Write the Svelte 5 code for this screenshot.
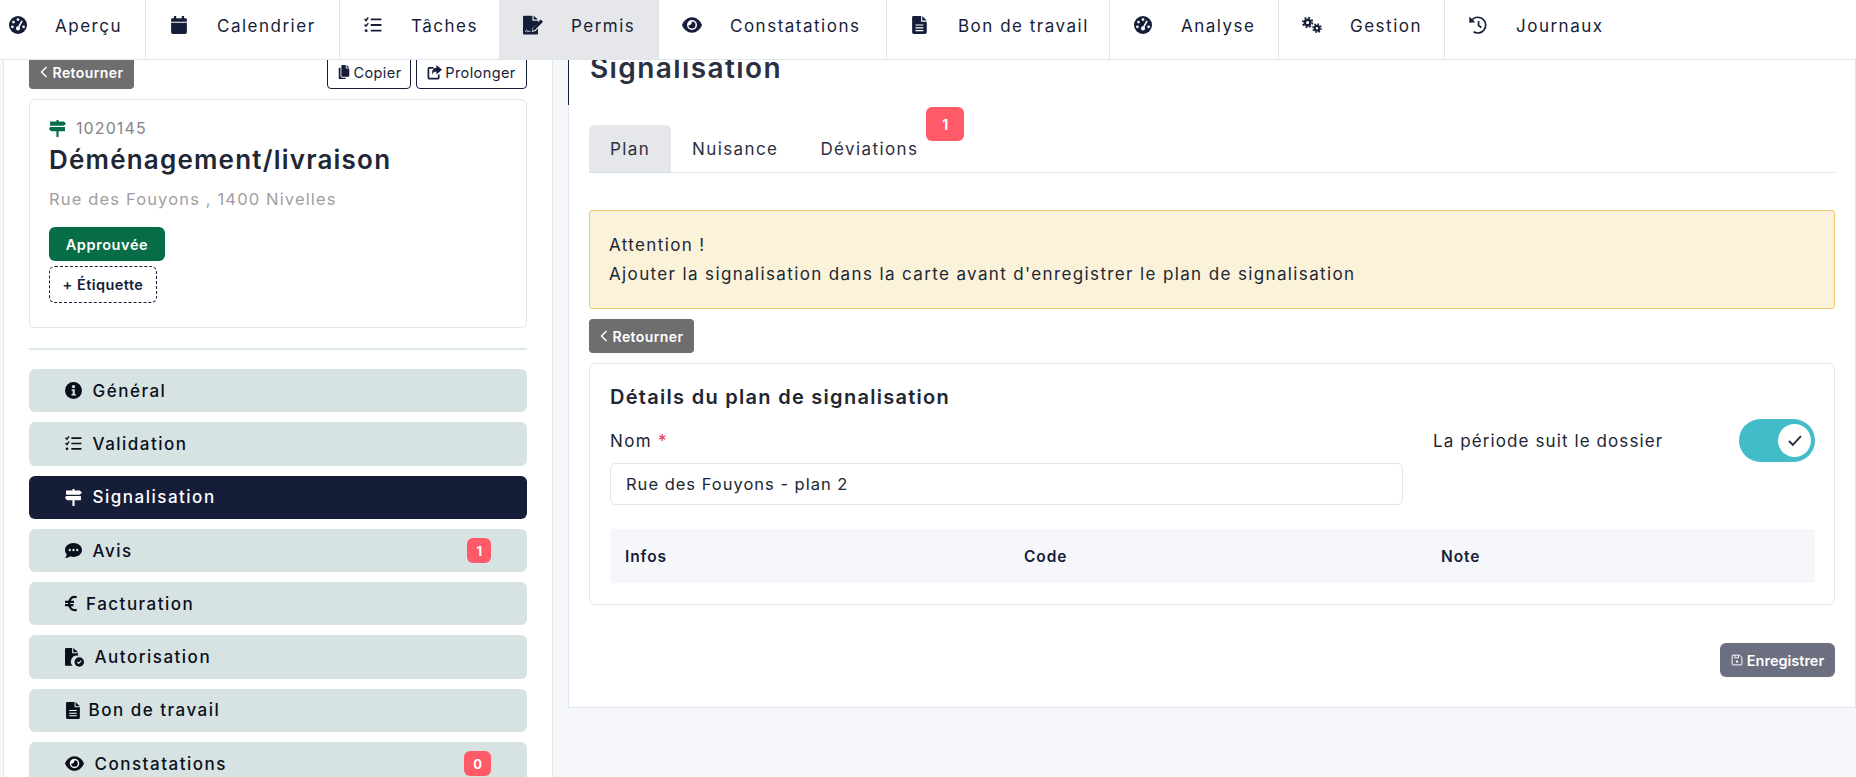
<script>
	const navItems = [
		{ icon: 'gauge', label: 'Aperçu', size: 18 },
		{ icon: 'calendar', label: 'Calendrier', size: 18 },
		{ icon: 'tasks', label: 'Tâches', size: 18 },
		{ icon: 'sign', label: 'Permis', size: 20 },
		{ icon: 'eye', label: 'Constatations', size: 20 },
		{ icon: 'doc', label: 'Bon de travail', size: 18 },
		{ icon: 'gauge', label: 'Analyse', size: 18 },
		{ icon: 'cogs', label: 'Gestion', size: 20 },
		{ icon: 'history', label: 'Journaux', size: 18 }
	];

	const menu = [
		{ icon: 'info', label: 'Général', size: 17 },
		{ icon: 'tasks', label: 'Validation', size: 17 },
		{ icon: 'signs', label: 'Signalisation', size: 17, active: true },
		{ icon: 'comment', label: 'Avis', size: 17, badge: 1 },
		{ icon: 'euro', label: 'Facturation', size: 17, gap: 'tight' },
		{ icon: 'auth', label: 'Autorisation', size: 19 },
		{ icon: 'doc', label: 'Bon de travail', size: 17, gap: 'mid' },
		{ icon: 'eye', label: 'Constatations', size: 19, badge: 0 }
	];
</script>

{#snippet icon(name, size = 16)}
	<svg class="ico" width={size} height={size} viewBox="0 0 16 16" aria-hidden="true">
		{#if name === 'gauge'}
			<circle cx="8" cy="8" r="8" fill="currentColor" />
			<circle cx="8" cy="3.2" r="1.2" fill="#fff" />
			<circle cx="4" cy="5.4" r="1.2" fill="#fff" />
			<circle cx="3" cy="9.6" r="1.2" fill="#fff" />
			<circle cx="13" cy="9.6" r="1.2" fill="#fff" />
			<path d="M11.6 4.4 8.6 9.6" stroke="#fff" stroke-width="1.5" />
			<circle cx="8" cy="11" r="1.8" fill="#fff" />
		{:else if name === 'calendar'}
			<path fill="currentColor" d="M3.5 0h2v2h5V0h2v2H14a1 1 0 0 1 1 1v2H1V3a1 1 0 0 1 1-1h1.5zM1 6h14v8.5a1.5 1.5 0 0 1-1.5 1.5h-11A1.5 1.5 0 0 1 1 14.500z" />
		{:else if name === 'tasks'}
			<path fill="none" stroke="currentColor" stroke-width="1.3" d="M.5 2.600 1.800 4 3.800 1.300M.5 7.600 1.800 9 3.800 6.300" />
			<circle cx="1.900" cy="13" r="1.300" fill="currentColor" />
			<path fill="none" stroke="currentColor" stroke-width="1.600" d="M6 3h9.500M6 8h9.500M6 13h9.500" />
		{:else if name === 'sign'}
			<path fill="currentColor" d="M0 1.500a1 1 0 0 1 1-1h6.500v4H12v1.800L7.500 10.500 7 13.500l3-.7 2-2v3.700a1 1 0 0 1-1 1H1a1 1 0 0 1-1-1z" />
			<path fill="currentColor" d="M8.500.5l3.500 3H8.500zM14 3.500l2 1.800-6.500 6.700-2 .5.500-2.100z" />
			<path fill="none" stroke="#e5e7eb" stroke-width=".8" d="M1.800 13.500c1-2 1.600-1.500 2 0 .8-.8 1.500-.8 2 0" />
		{:else if name === 'eye'}
			<path fill="currentColor" d="M8 1.800C4.500 1.800 1.500 4.300 0 8c1.500 3.700 4.500 6.200 8 6.200s6.500-2.500 8-6.200c-1.500-3.700-4.500-6.200-8-6.200z" />
			<circle cx="8" cy="8" r="4" fill="#fff" />
			<path fill="currentColor" d="M8 5.200A2.800 2.800 0 1 1 5.200 8c.8.500 2.800-.5 2.800-2.800z" />
		{:else if name === 'doc'}
			<path fill="currentColor" d="M2 0h7v5h5v9.500a1.500 1.500 0 0 1-1.500 1.500h-10A1.500 1.500 0 0 1 1 14.500V1a1 1 0 0 1 1-1zM10 0l4 4h-4z" />
			<path stroke="#fff" stroke-width="1" d="M4 8h7M4 10.500h7M4 13h7" />
		{:else if name === 'cogs'}
			<circle cx="4.500" cy="6" r="2.300" fill="none" stroke="currentColor" stroke-width="2" />
			<circle cx="4.500" cy="6" r="3.900" fill="none" stroke="currentColor" stroke-width="1.300" stroke-dasharray="1.530 1.530" />
			<circle cx="12" cy="10.500" r="1.900" fill="none" stroke="currentColor" stroke-width="1.800" />
			<circle cx="12" cy="10.500" r="3.300" fill="none" stroke="currentColor" stroke-width="1.200" stroke-dasharray="1.300 1.290" />
		{:else if name === 'history'}
			<path fill="none" stroke="currentColor" stroke-width="1.500" d="M2.500 3.500A7 7 0 1 1 4 14M8.500 4.500v4l2.500 1.700" />
			<path fill="currentColor" d="M.3.500 5.600 5.600.3 6z" />
		{:else if name === 'signs'}
			<path fill="currentColor" d="M7 0h2v1.500h5l2 2-2 2H1v-4h6zM1 6.500h14v4H9V16H7v-5.500H2l-2-2z" />
		{:else if name === 'info'}
			<circle cx="8" cy="8" r="8" fill="currentColor" />
			<circle cx="8" cy="4.300" r="1.500" fill="#d7e2e3" />
			<path fill="#d7e2e3" d="M6.200 6.800h3v4.400h1v1.500H6.200v-1.500h1V8.300h-1z" />
		{:else if name === 'comment'}
			<path fill="currentColor" d="M8 1c4.400 0 8 2.900 8 6.500S12.400 14 8 14c-1.100 0-2.200-.2-3.100-.5C3.800 14.400 2.200 15 0 15c.9-1 1.500-2.100 1.700-3.400C.6 10.500 0 9.100 0 7.500 0 3.900 3.600 1 8 1z" />
			<circle cx="4.500" cy="7.500" r="1.100" fill="#d7e2e3" />
			<circle cx="8" cy="7.500" r="1.100" fill="#d7e2e3" />
			<circle cx="11.500" cy="7.500" r="1.100" fill="#d7e2e3" />
		{:else if name === 'euro'}
			<path fill="none" stroke="currentColor" stroke-width="2" d="M11 2.200C7 .6 3.800 3.700 3.800 8s3.200 7.400 7.200 5.800M0 6.500h8.500M0 9.500h8" />
		{:else if name === 'auth'}
			<path fill="currentColor" d="M0 1a1 1 0 0 1 1-1h5v4.500h5v2a5 5 0 0 0-4.500 8.500H1a1 1 0 0 1-1-1zM7 0l4 3.500H7z" />
			<circle cx="12" cy="11.800" r="4" fill="currentColor" />
			<path fill="none" stroke="#d7e2e3" stroke-width="1" d="M10.300 11.800l1.200 1.200 2.200-2.400" />
		{:else if name === 'copy'}
			<path fill="currentColor" d="M6 0h4v4h4v8.500a1 1 0 0 1-1 1H6a1 1 0 0 1-1-1V1a1 1 0 0 1 1-1zM11 0l3 3h-3zM2 3h2v9.500A2 2 0 0 0 6 14.500h4v.5a1 1 0 0 1-1 1H3a1 1 0 0 1-1-1z" />
		{:else if name === 'share'}
			<path fill="none" stroke="currentColor" stroke-width="1.800" d="M7 3H2.500A1 1 0 0 0 1.500 4v9.500a1 1 0 0 0 1 1h9a1 1 0 0 0 1-1V10" />
			<path fill="currentColor" d="M10 0l6 5-6 5V7C7.500 7 6.200 8 6 10.500 4.600 7 6 3.500 10 3z" />
		{:else if name === 'save'}
			<path fill="none" stroke="currentColor" stroke-width="1.300" d="M2.500 1.500h9l3 3v9a1 1 0 0 1-1 1h-11a1 1 0 0 1-1-1v-11a1 1 0 0 1 1-1zM5 1.500v3.500h5V1.500" />
			<circle cx="8" cy="10.300" r="1.500" fill="currentColor" />
		{/if}
	</svg>
{/snippet}

<div class="page">
	<nav class="topnav">
		{#each navItems as item}
			<a class="nav-item" class:active={item.label === 'Permis'} href="#top">
				<span class="nav-icon">{@render icon(item.icon, item.size)}</span>
				<span>{item.label}</span>
			</a>
		{/each}
	</nav>

	<div class="body">
		<aside class="side">
			<div class="side-actions">
				<button class="btn-back">
					<svg width="8" height="12" viewBox="0 0 8 12"><path d="M6.500 1 1.500 6l5 5" fill="none" stroke="currentColor" stroke-width="1.500" /></svg>
					Retourner
				</button>
				<div class="side-actions-right">
					<button class="btn-outline">{@render icon('copy', 14)} Copier</button>
					<button class="btn-outline">{@render icon('share', 15)} Prolonger</button>
				</div>
			</div>

			<section class="summary">
				<div class="ref">
					<span class="ref-icon">{@render icon('signs', 17)}</span>
					1020145
				</div>
				<h2>Déménagement/livraison</h2>
				<p class="address">Rue des Fouyons , 1400 Nivelles</p>
				<span class="status">Approuvée</span>
				<button class="tag">+ Étiquette</button>
			</section>

			<hr />

			<ul class="menu">
				{#each menu as row}
					<li class="menu-row" class:active={row.active}>
						{@render icon(row.icon, row.size)}
						<span class="menu-label {row.gap ?? ''}">{row.label}</span>
						{#if row.badge !== undefined}
							<span class="count">{row.badge}</span>
						{/if}
					</li>
				{/each}
			</ul>
		</aside>

		<main class="panel">
			<header class="panel-head">
				<h1>Signalisation</h1>
			</header>
			<div class="panel-body">
				<div class="tabs">
					<button class="tab active">Plan</button>
					<button class="tab">Nuisance</button>
					<button class="tab">Déviations<span class="tab-badge">1</span></button>
				</div>

				<div class="alert">
					<div>Attention !</div>
					<div>Ajouter la signalisation dans la carte avant d'enregistrer le plan de signalisation</div>
				</div>

				<button class="btn-back second">
					<svg width="8" height="12" viewBox="0 0 8 12"><path d="M6.500 1 1.500 6l5 5" fill="none" stroke="currentColor" stroke-width="1.500" /></svg>
					Retourner
				</button>

				<section class="details">
					<h3>Détails du plan de signalisation</h3>
					<div class="form-row">
						<div class="field">
							<label for="nom">Nom <span class="req">*</span></label>
							<input id="nom" value="Rue des Fouyons - plan 2" />
						</div>
						<div class="follow">
							<span>La période suit le dossier</span>
							<span class="toggle">
								<span class="knob">
									<svg width="16" height="13" viewBox="0 0 14 12"><path d="M1.500 6.500 5 10l7.500-8" fill="none" stroke="#2b3040" stroke-width="1.800" /></svg>
								</span>
							</span>
						</div>
					</div>
					<div class="thead">
						<span>Infos</span>
						<span>Code</span>
						<span>Note</span>
					</div>
				</section>

				<div class="actions">
					<button class="btn-save">{@render icon('save', 12)} Enregistrer</button>
				</div>
			</div>
		</main>
	</div>
</div>

<style>
	:global(body) {
		margin: 0;
		background: #f5f7fa;
	}
	.page {
		height: 777px;
		overflow: hidden;
		display: flex;
		flex-direction: column;
		font-family: Inter, 'Noto Sans', sans-serif;
		color: #212634;
	}
	button {
		font-family: inherit;
		cursor: pointer;
	}
	h1, h2, h3, p, ul {
		margin: 0;
		padding: 0;
	}

	.topnav {
		height: 59px;
		flex: none;
		display: grid;
		grid-template-columns: 146px 194px 160px 159px 228px 223px 169px 166px 1fr;
		background: #fff;
		border-bottom: 1px solid #dde6e8;
		position: relative;
		z-index: 2;
	}
	.nav-item {
		display: flex;
		align-items: center;
		gap: 30px;
		padding: 0 0 7px 25px;
		border-right: 1px solid #dde6e8;
		color: #161d38;
		text-decoration: none;
		font-size: 17px;
		letter-spacing: 1.5px;
	}
	.nav-item:first-child {
		padding-left: 10px;
		gap: 29px;
	}
	.nav-item:last-child {
		border-right: 0;
	}
	.nav-item.active {
		background: #e5e7eb;
	}
	.nav-icon {
		width: 16px;
		margin-top: -2px;
		display: flex;
		justify-content: center;
	}
	.ico {
		flex: none;
	}

	.body {
		flex: 1;
		min-height: 0;
		display: flex;
		gap: 15px;
		padding-left: 3px;
		overflow: hidden;
	}

	.side {
		width: 550px;
		flex: none;
		box-sizing: border-box;
		background: #fff;
		border-left: 1px solid #dde6e8;
		border-right: 1px solid #dde6e8;
		padding: 0 25px;
	}
	.side-actions {
		display: flex;
		justify-content: space-between;
		margin-top: -5px;
	}
	.side-actions-right {
		display: flex;
		gap: 5px;
	}
	.btn-back {
		height: 34px;
		width: 105px;
		display: flex;
		align-items: center;
		justify-content: center;
		gap: 5px;
		padding: 0;
		background: #6e6e6e;
		color: #fff;
		border: 0;
		border-radius: 4px;
		font-size: 14px;
		font-weight: 600;
		letter-spacing: 0.4px;
	}
	.btn-outline {
		height: 34px;
		padding: 0;
		display: flex;
		align-items: center;
		justify-content: center;
		gap: 3px;
		background: #fff;
		color: #161d38;
		border: 1px solid #161d38;
		border-radius: 4px;
		font-size: 14.500px;
		letter-spacing: 0.4px;
	}
	.btn-outline:first-child {
		width: 84px;
	}
	.btn-outline:last-child {
		width: 111px;
	}

	.summary {
		margin-top: 10px;
		height: 229px;
		box-sizing: border-box;
		border: 1px solid #dde6e8;
		border-radius: 6px;
		padding: 18px 19px 0;
		display: flex;
		flex-direction: column;
		align-items: flex-start;
	}
	.ref {
		display: flex;
		align-items: center;
		gap: 10px;
		font-size: 16px;
		letter-spacing: 1.1px;
		color: #848484;
		height: 20px;
	}
	.ref-icon {
		display: flex;
		color: #066d47;
	}
	.summary h2 {
		margin-top: 4px;
		font-size: 26px;
		line-height: 36px;
		font-weight: 600;
		letter-spacing: 1.2px;
	}
	.address {
		margin-top: 9px;
		font-size: 16.500px;
		line-height: 24px;
		letter-spacing: 1.15px;
		color: #a0a0a0;
	}
	.status {
		margin-top: 16px;
		width: 116px;
		height: 34px;
		display: flex;
		align-items: center;
		justify-content: center;
		background: #066d47;
		color: #fff;
		border-radius: 6px;
		font-size: 14.500px;
		font-weight: 600;
		letter-spacing: 0.6px;
	}
	.tag {
		margin-top: 5px;
		width: 108px;
		height: 37px;
		padding: 0;
		background: #fff;
		color: #161d38;
		border: 1px dashed #161d38;
		border-radius: 6px;
		font-size: 14.500px;
		font-weight: 600;
		letter-spacing: 0.45px;
	}

	hr {
		margin: 20px 0 0;
		border: 0;
		border-top: 2px solid #dde6e8;
	}

	.menu {
		list-style: none;
		margin-top: 19px;
		display: flex;
		flex-direction: column;
		gap: 10px;
	}
	.menu-row {
		height: 43.300px;
		display: flex;
		align-items: center;
		padding: 0 36px;
		background: #d7e2e3;
		border-radius: 6px;
		font-size: 17px;
		font-weight: 500;
		letter-spacing: 1.5px;
		color: #0a0f1c;
	}
	.menu-row.active {
		background: #161d38;
		color: #fff;
	}
	.menu-label {
		margin-left: 10.500px;
	}
	.menu-label.tight {
		margin-left: 4px;
	}
	.menu-label.mid {
		margin-left: 6.500px;
	}
	.count {
		margin-left: auto;
		height: 25px;
		padding: 0 9px;
		box-sizing: border-box;
		display: flex;
		align-items: center;
		justify-content: center;
		background: #ff5a67;
		color: #fff;
		border-radius: 6px;
		font-size: 13px;
		font-weight: 700;
		letter-spacing: 0;
	}

	.panel {
		width: 1288px;
		height: 648px;
		box-sizing: border-box;
		flex: none;
		background: #fff;
		border: 1px solid #dde6e8;
		border-top: 0;
	}
	.panel-head {
		height: 45px;
		border-left: 1px solid #161d38;
		margin-left: -1px;
		padding-left: 21px;
		overflow: hidden;
	}
	.panel-head h1 {
		margin-top: -10px;
		font-size: 28px;
		line-height: 36px;
		font-weight: 600;
		letter-spacing: 1.4px;
		color: #2b3040;
	}
	.panel-body {
		padding: 20px 20px 0 20px;
	}

	.tabs {
		display: flex;
		border-bottom: 1px solid #dde6e8;
		height: 47px;
	}
	.tab {
		position: relative;
		height: 48px;
		padding: 0 21px;
		background: none;
		border: 0;
		border-radius: 6px 6px 0 0;
		font-size: 17px;
		letter-spacing: 1.4px;
		color: #2b3040;
	}
	.tab.active {
		width: 82px;
		padding: 0;
		background: #e5e7eb;
		border-bottom: 1px solid #d7e2e3;
	}
	.tab-badge {
		position: absolute;
		left: 127px;
		top: -18px;
		width: 38px;
		height: 34px;
		display: flex;
		align-items: center;
		justify-content: center;
		background: #ff5a67;
		color: #fff;
		border-radius: 6px;
		font-size: 14px;
		font-weight: 700;
		letter-spacing: 0;
	}

	.alert {
		margin-top: 37px;
		height: 99px;
		box-sizing: border-box;
		padding: 20px 19px 0;
		background: #fbf2da;
		border: 1px solid #eec96e;
		border-radius: 3px;
		font-size: 17px;
		line-height: 29px;
		letter-spacing: 1.37px;
		color: #212634;
	}

	.second {
		margin-top: 10px;
	}

	.details {
		margin-top: 10px;
		height: 242px;
		box-sizing: border-box;
		border: 1px solid #dde6e8;
		border-radius: 6px;
		padding: 20px 19px 0 20px;
	}
	.details h3 {
		font-size: 20px;
		line-height: 26px;
		font-weight: 600;
		letter-spacing: 1.28px;
	}
	.form-row {
		margin-top: 19px;
		display: flex;
	}
	.field {
		width: 793px;
	}
	.field label {
		display: block;
		height: 24px;
		font-size: 17px;
		line-height: 24px;
		letter-spacing: 1.35px;
	}
	.req {
		color: #e8344e;
	}
	input {
		margin-top: 10px;
		width: 100%;
		height: 42px;
		box-sizing: border-box;
		padding: 0 15px;
		border: 1px solid #dde6e8;
		border-radius: 6px;
		font-family: inherit;
		font-size: 16.500px;
		letter-spacing: 1px;
		color: #212634;
		outline: none;
	}
	.follow {
		margin-left: 30px;
		flex: 1;
		display: flex;
		justify-content: space-between;
		align-items: flex-start;
		font-size: 17px;
		line-height: 24px;
		letter-spacing: 1.1px;
	}
	.toggle {
		margin-top: -10px;
		width: 76px;
		height: 43px;
		box-sizing: border-box;
		padding: 5px 4px;
		display: flex;
		justify-content: flex-end;
		background: #43bcc9;
		border-radius: 22px;
	}
	.knob {
		width: 33px;
		height: 33px;
		display: flex;
		align-items: center;
		justify-content: center;
		background: #fff;
		border-radius: 50%;
	}
	.thead {
		margin-top: 24px;
		height: 54px;
		display: grid;
		grid-template-columns: 399px 417px 1fr;
		align-items: center;
		padding-left: 15px;
		background: #f5f7fa;
		font-size: 15.500px;
		font-weight: 600;
		letter-spacing: 0.9px;
		color: #161d38;
	}

	.actions {
		margin-top: 38px;
		display: flex;
		justify-content: flex-end;
	}
	.btn-save {
		width: 115px;
		height: 34px;
		padding: 0;
		display: flex;
		align-items: center;
		justify-content: center;
		gap: 4px;
		background: #6b6f80;
		color: #fff;
		border: 0;
		border-radius: 6px;
		font-size: 14.500px;
		font-weight: 600;
	}
</style>
